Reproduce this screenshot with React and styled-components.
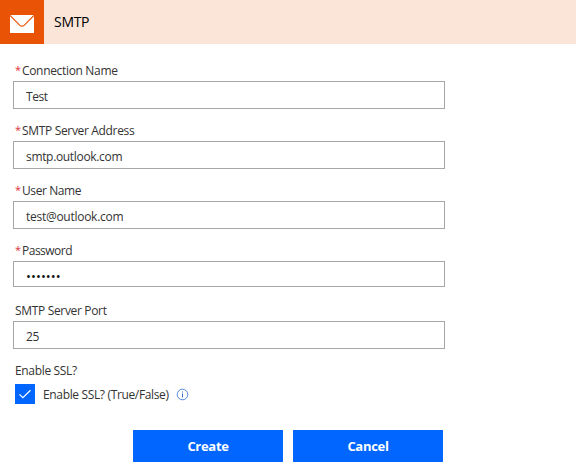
import React from "react";
import styled, { createGlobalStyle } from "styled-components";

const GlobalStyle = createGlobalStyle`
  * { box-sizing: border-box; }
  body {
    margin: 0;
    background: #fff;
    color: #333;
    font: 12px/16px "Open Sans", "Noto Sans", sans-serif;
  }
`;

const Card = styled.main`
  width: 576px;
  height: 472px;
  overflow: hidden;
  background: #fff;
`;

const Header = styled.header`
  display: flex;
  align-items: center;
  height: 44px;
  background: #fae5d8;
`;

const Logo = styled.div`
  width: 44px;
  height: 44px;
  padding: 15px 10px;
  background: #e85306;

  svg { display: block; }
`;

const Title = styled.h1`
  margin: 0 0 0 10px;
  color: #000;
  font-size: 14px;
  font-weight: 400;
  line-height: 20px;
  letter-spacing: -0.3px;
`;

const Form = styled.form`
  width: 445px;
  padding: 19px 0 0 13px;
`;

const Field = styled.div`
  height: 60px;
`;

const Label = styled.label`
  display: flex;
  height: 18px;
  padding-left: 2px;
  line-height: 16px;
  white-space: nowrap;
  letter-spacing: ${(p) => p.$spacing || -0.33}px;
`;

const Required = styled.span`
  width: 7px;
  color: #e0303a;
  font-size: 11px;
  line-height: 14px;
  letter-spacing: 0;
`;

const Input = styled.input`
  display: block;
  width: 432px;
  height: ${(p) => p.$height || 28}px;
  padding: 3px 12px 0;
  border: 1px solid #a6a6a6;
  border-radius: 0;
  outline: none;
  background: #fff;
  color: ${(p) => p.$color || "#333"};
  font: inherit;
  font-size: ${(p) => p.$size || 12}px;
  letter-spacing: ${(p) => p.$spacing || -0.33}px;
`;

const CheckRow = styled.div`
  display: flex;
  align-items: center;
  height: 20px;
  margin-top: 3px;
  padding-left: 2px;
`;

const CheckBox = styled.span`
  width: 20px;
  height: 20px;
  margin-right: 8px;
  background: #0066ff;

  svg { display: block; }
`;

const CheckText = styled.span`
  flex: none;
  width: 133px;
  padding-top: 1px;
  white-space: nowrap;
  letter-spacing: -0.35px;
`;

const Actions = styled.div`
  display: flex;
  gap: 10px;
  margin: 26px 0 0 120px;
`;

const Button = styled.button`
  flex: none;
  width: 150px;
  height: 32px;
  padding: 0;
  border: 0;
  background: #0066ff;
  color: #fff;
  font: 700 13px/32px "Open Sans", "Noto Sans", sans-serif;
  letter-spacing: -0.3px;
`;

const fields = [
  { id: "name", label: "Connection Name", value: "Test", required: true, spacing: -0.4 },
  { id: "server", label: "SMTP Server Address", value: "smtp.outlook.com", required: true },
  { id: "user", label: "User Name", value: "test@outlook.com", required: true, labelSpacing: -0.42, spacing: -0.27 },
  { id: "password", label: "Password", value: "•••••••", required: true, labelSpacing: -0.5, height: 26, size: 13, spacing: 0.08, color: "#111" },
  { id: "port", label: "SMTP Server Port", value: "25" },
];

function MailIcon() {
  return (
    <svg width="24" height="18" viewBox="0 0 24 18">
      <path d="M0 0h24v18H0z" fill="#fff" />
      <path d="M0 .5l9.6 9.6q2.4 2.1 4.8 0L24 .5" fill="none" stroke="#e85306" strokeWidth="1.2" />
    </svg>
  );
}

function CheckIcon() {
  return (
    <svg width="20" height="20" viewBox="0 0 20 20">
      <path d="M4.5 10.3l3.4 3.4 7.6-7.5" fill="none" stroke="#fff" strokeWidth="1.2" />
    </svg>
  );
}

function InfoIcon() {
  return (
    <svg width="13" height="13" viewBox="0 0 13 13">
      <circle cx="6.5" cy="6.5" r="5.3" fill="none" stroke="#3b7ce0" strokeWidth=".9" />
      <path d="M6.5 5.5v4M6.5 3.5v1" stroke="#3b6fc8" strokeWidth="1" />
    </svg>
  );
}

export default function App() {
  return (
    <Card>
      <GlobalStyle />
      <Header>
        <Logo><MailIcon /></Logo>
        <Title>SMTP</Title>
      </Header>
      <Form onSubmit={(e) => e.preventDefault()}>
        {fields.map((f) => (
          <Field key={f.id}>
            <Label htmlFor={f.id} $spacing={f.labelSpacing}>
              {f.required && <Required>*</Required>}
              {f.label}
            </Label>
            <Input
              id={f.id}
              defaultValue={f.value}
              $height={f.height}
              $size={f.size}
              $spacing={f.spacing}
              $color={f.color}
            />
          </Field>
        ))}
        <Label as="div">Enable SSL?</Label>
        <CheckRow>
          <CheckBox role="checkbox" aria-checked="true"><CheckIcon /></CheckBox>
          <CheckText>Enable SSL? (True/False)</CheckText>
          <InfoIcon />
        </CheckRow>
        <Actions>
          <Button type="submit">Create</Button>
          <Button type="button">Cancel</Button>
        </Actions>
      </Form>
    </Card>
  );
}
